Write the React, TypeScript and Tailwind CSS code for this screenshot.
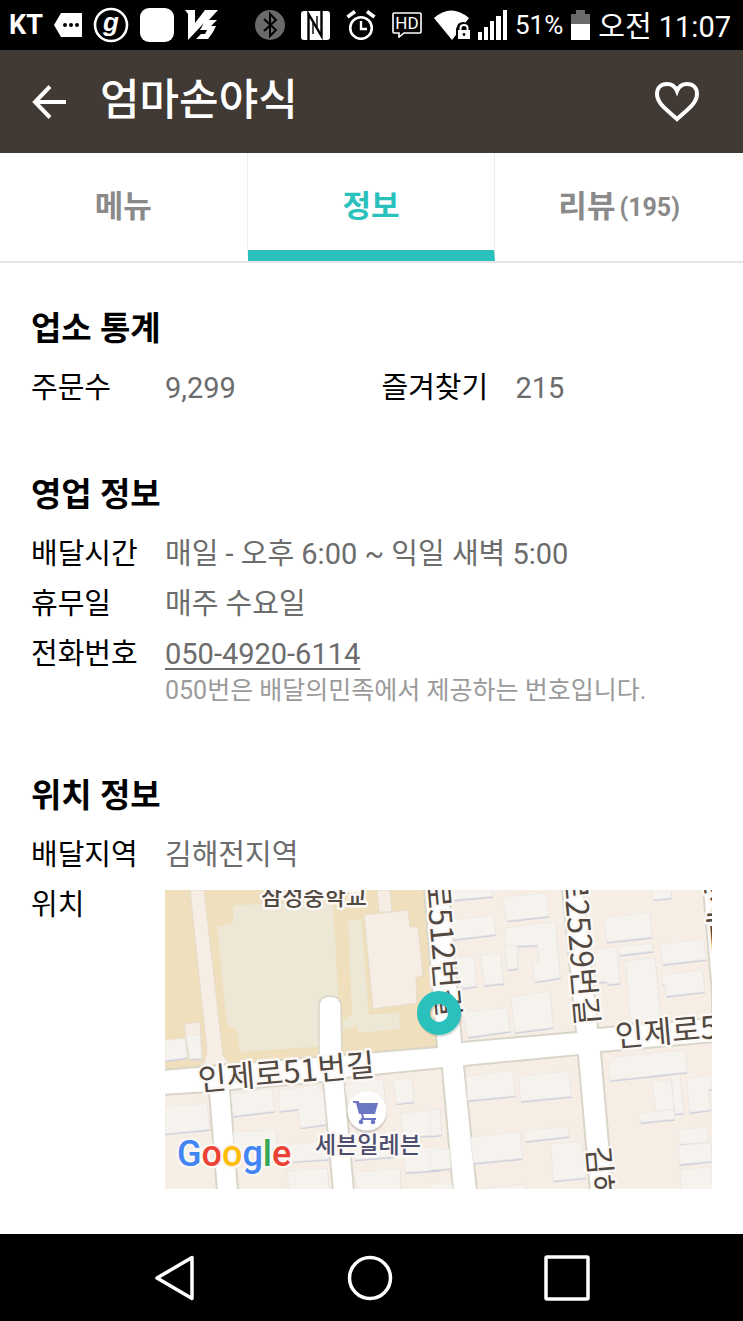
import { useState } from "react";
import type { ReactNode } from "react";

type TabKey = "menu" | "info" | "review";

const tabs: { key: TabKey; label: string; count?: number }[] = [
  { key: "menu", label: "메뉴" },
  { key: "info", label: "정보" },
  { key: "review", label: "리뷰", count: 195 },
];

const StatusBar = () => (
  <div className="flex h-[50px] items-center justify-between bg-black pl-[9px] pr-3 text-white">
    <div className="flex items-center gap-[11px]">
      <span className="text-[27px] leading-8 font-bold">KT</span>
      <svg width="28" height="24" viewBox="0 0 28 24" fill="#fff">
        <path d="M7 0h21v24H7L0 12z" />
        <g fill="#000">
          <circle cx="11" cy="12" r="2" />
          <circle cx="17" cy="12" r="2" />
          <circle cx="23" cy="12" r="2" />
        </g>
      </svg>
      <svg width="36" height="36" viewBox="0 0 36 36">
        <circle cx="18" cy="18" r="16" fill="none" stroke="#fff" strokeWidth="2.6" />
        <text
          x="18"
          y="24"
          textAnchor="middle"
          fill="#fff"
          className="font-['Liberation_Sans',sans-serif] text-[26px] font-bold italic"
        >
          g
        </text>
      </svg>
      <span className="size-[34px] rounded-[9px] bg-white" />
      <svg width="34" height="30" viewBox="0 0 34 30" fill="#fff">
        <path d="M0 0H10V13L20 0H33L24 10H32L26 16H31L28 22L23 29H11L16 24H20L22 20H15L19 13L3 30V4z" />
      </svg>
    </div>

    <div className="flex items-center gap-2">
      <div className="flex items-center gap-4">
        <svg width="30" height="30" viewBox="0 0 30 30">
          <circle cx="15" cy="15" r="15" fill="#6a6a6a" />
          <path
            d="M9 9l12 11-6 6V4l6 6L9 21"
            fill="none"
            stroke="#000"
            strokeWidth="2"
          />
        </svg>
        <svg width="29" height="29" viewBox="0 0 29 29">
          <rect width="29" height="29" rx="3" fill="#fff" />
          <g fill="none" stroke="#000">
            <path d="M7.500 29V3L20.500 25V0" strokeWidth="2.400" />
            <path d="M12 12V23M16 5V16" strokeWidth="1.400" />
          </g>
        </svg>
        <svg width="30" height="30" viewBox="0 0 30 30" fill="none" stroke="#fff">
          <circle cx="15" cy="18" r="10.800" strokeWidth="2.600" />
          <path d="M15 11v8h6" strokeWidth="2.400" />
          <path d="M1.500 7L9 1.500M28.500 7L21 1.500" strokeWidth="3.600" />
        </svg>
        <svg width="30" height="26" viewBox="0 0 30 26">
          <path
            d="M2 1h26q1 0 1 1v18q0 1-1 1H12l-5 4v-4H2q-1 0-1-1V2q0-1 1-1z"
            fill="none"
            stroke="#fff"
            strokeWidth="1.600"
          />
          <text
            x="15"
            y="17"
            textAnchor="middle"
            fill="#fff"
            className="text-[17px]"
          >
            HD
          </text>
        </svg>
      </div>
      <svg className="ml-1" width="36" height="30" viewBox="0 0 36 30">
        <path d="M0 8Q17-7 35 8L18 30z" fill="#fff" />
        <path d="M22 30V19l2-5q5-4 10 0l2 5v11z" fill="#000" />
        <path d="M24 20h12v9H24z" fill="#fff" />
        <path d="M26.500 20v-2q0-3 3.500-3t3.500 3v2" fill="none" stroke="#fff" strokeWidth="2" />
        <circle cx="30" cy="24.500" r="1.400" fill="#000" />
      </svg>
      <svg width="29" height="30" viewBox="0 0 29 30" fill="#fff">
        <path d="M0 22h4v8H0zM6 17h4v13H6zM12 11h4v19h-4zM18 6h5v24h-5zM25 0h4v30h-4z" />
      </svg>
      <span className="text-[26px] leading-8">51%</span>
      <svg width="19" height="30" viewBox="0 0 19 30">
        <path d="M0 4h5V0h9v4h5v11H0z" fill="#6a6a6a" />
        <path d="M0 14h19v16H0z" fill="#fff" />
      </svg>
      <span className="pt-1 text-[29px] leading-8">오전 11:07</span>
    </div>
  </div>
);

// Outlines of the buildings on the map, grouped by the quarter they stand in
const buildings = {
  topRight: [
    "62,15 187,15 187,34 62,45",
    "219,44 244,34 349,24 357,93 231,107",
    "62,104 190,92 198,148 70,163",
    "226,129 376,110 391,278 315,290 307,236 328,230 322,180 228,184",
    "226,184 262,182 263,250 232,254",
    "75,217 132,211 140,303 95,309",
    "152,210 212,205 221,295 163,301",
    "95,382 233,368 240,438 115,456",
    "242,335 360,320 370,427 255,442",
    "667,15 724,15 724,38 670,44",
    "523,97 660,83 666,156 530,171",
    "495,192 560,186 570,294 534,298 530,290 502,290",
    "566,185 667,175 669,198 568,210",
    "587,228 675,218 692,400 602,415",
    "690,178 820,163 829,223 698,238",
    "695,270 819,255 824,320 709,333 705,300 697,296",
  ],
  bottomLeft: [
    "15,16 75,10 82,68 15,76",
    "78,0 120,0 125,70 90,72",
    "15,216 140,205 150,283 15,296",
    "213,176 335,162 343,228 220,243",
    "356,165 470,150 490,172 498,268 422,278 414,222 358,228",
    "555,155 590,135 670,135 676,205 565,205",
    "700,135 755,130 762,200 709,206",
    "722,235 840,222 840,298 730,308",
    "220,292 348,284 352,340 224,350",
    "385,330 500,318 505,372 390,380",
    "382,408 502,400 508,465 386,465",
    "580,328 705,320 710,364 584,374",
    "584,412 720,402 722,465 590,465",
    "730,345 840,335 840,405 736,412",
  ],
  bottomRight: [
    "110,125 248,106 256,182 113,196",
    "266,124 417,108 424,184 272,198",
    "120,308 270,290 277,370 130,384",
    "282,288 413,274 416,304 286,319",
    "362,326 455,320 468,428 370,437",
    "145,462 282,448 285,465 145,465",
    "0,226 30,222 35,299 0,303",
    "0,348 58,342 63,400 0,405",
    "0,446 65,440 68,465 0,465",
    "536,95 560,66 767,44 771,111 540,136",
    "667,142 722,134 734,222 677,228",
    "724,122 750,118 761,234 736,236",
    "628,236 731,222 734,252 632,262",
    "770,132 846,120 846,162 836,164 842,224 778,232",
    "744,284 832,276 836,322 748,328",
    "742,332 844,322 846,378 747,388",
    "750,406 846,395 846,465 753,465",
  ],
};

const Buildings = ({ shapes }: { shapes: string[] }) => (
  <g strokeWidth="2">
    {shapes.map((points) => (
      <g key={points}>
        <polygon points={points} fill="#cfd1de" transform="translate(1 5)" />
        <polygon points={points} fill="#f6f3ee" stroke="#ebe7e3" />
      </g>
    ))}
  </g>
);

const LocationMap = () => (
  <svg
    role="img"
    aria-label="위치"
    className="mt-[10px] h-[299px] w-full"
    viewBox="0 0 547 299"
    preserveAspectRatio="xMidYMid slice"
  >
    <rect width="547" height="299" fill="#fff" />

    {/* city blocks */}
    <g fill="#f6ede5" stroke="#d9d5c8" strokeWidth="2">
      <path d="M-2-2H259L272 157L-2 180z" fill="#efdfbd" />
      <path d="M284-2H397L411 142L297 152z" />
      <path d="M418-2H538L547 104V128L433 138z" />
      <path d="M-2 205L44 202L52 301H-2z" />
      <path d="M65 200L158 192L168 301H73z" />
      <path d="M179 188L277 178L288 301H189z" />
      <path d="M299 176L413 165L425 301H312z" />
      <path d="M436 162L549 152V301H448z" />
    </g>

    {/* school grounds */}
    <g fill="#ede7d5">
      <path d="M68 15L168 13L175 135L178 155L74 162L73 141L62 135L52 37L68 33z" />
      <path d="M183 30L196 29L204 125L234 122L235 139L194 143L192 136L178 140V130L187 125z" />
    </g>
    <g fill="#f6ede5" stroke="#e6dccb" strokeWidth="1">
      <path d="M25 0H39L58 165L64 173L38 176L42 162z" />
      <path d="M212 0H225L227 22H214z" />
      <path d="M199 25L243 20L245 37H253L258 85L251 88L252 113L208 119z" />
      <path d="M19 134L35 132L37 165L24 168z" />
    </g>
    <path
      d="M154 168V117Q154 106 165 106Q176 106 176 117L177 166"
      fill="#fff"
      stroke="#d9d5c8"
      strokeWidth="1.500"
    />
    <path d="M155 163h21v10h-21z" fill="#fff" />

    <g transform="translate(265 -5) scale(.3333)">
      <Buildings shapes={buildings.topRight} />
    </g>
    <g transform="translate(-5 145) scale(.3333)">
      <Buildings shapes={buildings.bottomLeft} />
    </g>
    <g transform="translate(265 145) scale(.3333)">
      <Buildings shapes={buildings.bottomRight} />
    </g>

    {/* street names */}
    <g
      fill="#514842"
      stroke="#fbf8f5"
      strokeWidth="5"
      strokeLinejoin="round"
      paintOrder="stroke"
      className="font-['Noto_Sans_CJK_KR',sans-serif] text-[31px]"
    >
      <text transform="translate(34 201) rotate(-5)">인제로51번길</text>
      <text transform="translate(451 157) rotate(-5)">인제로51번길</text>
      <text transform="translate(261 -9) rotate(85)">로512번길</text>
      <text transform="translate(398 -18) rotate(85)">로2529번길</text>
      <text transform="translate(539 -22) rotate(85)">인제로</text>
      <text transform="translate(422 257) rotate(85)">김해대로</text>
      <text x="96" y="15" className="text-[23px] font-medium">
        삼성중학교
      </text>
      <text x="150" y="263" fill="#4c4c6c" className="text-[23px] font-medium">
        세븐일레븐
      </text>
    </g>

    {/* shop */}
    <circle cx="202" cy="223" r="20" fill="#00000022" />
    <circle cx="202" cy="221" r="19.500" fill="#fff" />
    <g fill="#6b76c4">
      <path d="M191 213h22l-3 11h-16z" />
      <path
        d="M188 212h5l5 15-1 2h14"
        fill="none"
        stroke="#6b76c4"
        strokeWidth="2"
      />
      <circle cx="196" cy="232" r="2.300" />
      <circle cx="208" cy="232" r="2.300" />
    </g>

    {/* current place */}
    <circle cx="275" cy="125" r="15.500" fill="none" stroke="#00000022" strokeWidth="13" />
    <circle cx="274" cy="123" r="15.500" fill="none" stroke="#2ac1bc" strokeWidth="13" />

    <text
      x="12"
      y="276"
      stroke="#faf6f2"
      strokeWidth="5"
      strokeLinejoin="round"
      paintOrder="stroke"
      className="text-[36px] font-medium"
    >
      <tspan fill="#4285f4">G</tspan>
      <tspan fill="#ea4335">o</tspan>
      <tspan fill="#fbbc05">o</tspan>
      <tspan fill="#4285f4">g</tspan>
      <tspan fill="#34a853">l</tspan>
      <tspan fill="#ea4335">e</tspan>
    </text>
  </svg>
);

const Section = ({ title, children }: { title: string; children: ReactNode }) => (
  <section>
    <h2 className="mb-[9px] text-[33px] leading-[50px] font-bold">{title}</h2>
    {children}
  </section>
);

const Row = ({ label, children }: { label: string; children: ReactNode }) => (
  <div className="flex text-[29px] leading-[50px]">
    <dt className="w-[134px] shrink-0">{label}</dt>
    <dd className="min-w-0 flex-1 text-[#6c6c6c]">{children}</dd>
  </div>
);

const App = () => {
  const [activeTab, setActiveTab] = useState<TabKey>("info");
  const [liked, setLiked] = useState(false);

  return (
    <div className="flex min-h-screen flex-col bg-white font-['Roboto','Noto_Sans_CJK_KR',sans-serif] text-black">
      <StatusBar />

      <header className="flex h-[103px] items-center bg-[#413934] px-8 text-white">
        <button type="button" aria-label="뒤로">
          <svg width="35" height="34" viewBox="0 0 35 34" fill="none" stroke="#fff" strokeWidth="4">
            <path d="M18 1.500L3 17l15 15.500M3 17h31" />
          </svg>
        </button>
        <h1 className="ml-[33px] flex-1 pb-1 text-[43px] leading-[60px] font-medium">엄마손야식</h1>
        <button
          type="button"
          aria-label="찜하기"
          aria-pressed={liked}
          className="mr-3"
          onClick={() => setLiked(!liked)}
        >
          <svg
            width="44"
            height="40"
            viewBox="0 0 44 40"
            fill={liked ? "#fff" : "none"}
            stroke="#fff"
            strokeWidth="4"
          >
            <path d="M22 37C11 27 2 21 2 12C2 6 6 2 12 2C16 2 20 4 22 9C24 4 28 2 32 2C38 2 42 6 42 12C42 21 33 27 22 37z" />
          </svg>
        </button>
      </header>

      <nav className="grid h-[110px] grid-cols-3 border-b-2 border-[#e6e6e6]">
        {tabs.map((tab) => (
          <button
            key={tab.key}
            type="button"
            onClick={() => setActiveTab(tab.key)}
            className={`flex items-center justify-center gap-1 border-b-[11px] pt-3 text-[31px] font-bold ${
              tab.key !== "review" ? "border-r border-r-[#ececec]" : ""
            } ${
              activeTab === tab.key
                ? "border-b-[#2ac1bc] text-[#2ac1bc]"
                : "border-b-transparent text-[#8a8a8a]"
            }`}
          >
            {tab.label}
            {tab.count && <span className="text-[25px]">({tab.count})</span>}
          </button>
        ))}
      </nav>

      <main className="flex flex-col gap-[57px] px-[31px] pt-[41px] pb-10">
        <Section title="업소 통계">
          <dl className="grid grid-cols-2 gap-x-5">
            <Row label="주문수">9,299</Row>
            <Row label="즐겨찾기">215</Row>
          </dl>
        </Section>

        <Section title="영업 정보">
          <dl>
            <Row label="배달시간">매일 - 오후 6:00 ~ 익일 새벽 5:00</Row>
            <Row label="휴무일">매주 수요일</Row>
            <Row label="전화번호">
              <a
                href="tel:050-4920-6114"
                className="underline decoration-2 underline-offset-4"
              >
                050-4920-6114
              </a>
              <p className="pb-[11px] text-[25px] leading-6 text-[#9a9a9a]">
                050번은 배달의민족에서 제공하는 번호입니다.
              </p>
            </Row>
          </dl>
        </Section>

        <Section title="위치 정보">
          <dl>
            <Row label="배달지역">김해전지역</Row>
            <Row label="위치">
              <LocationMap />
            </Row>
          </dl>
        </Section>
      </main>

      <footer className="mt-auto flex h-[87px] items-center justify-center gap-[151px] bg-black">
        <button type="button" aria-label="이전">
          <svg width="42" height="46" viewBox="0 0 42 46" fill="none" stroke="#fff" strokeWidth="3.500">
            <path d="M38 2.500v41L3 23z" strokeLinejoin="round" />
          </svg>
        </button>
        <button type="button" aria-label="홈">
          <svg width="46" height="46" viewBox="0 0 46 46" fill="none" stroke="#fff" strokeWidth="3.500">
            <circle cx="23" cy="23" r="20.500" />
          </svg>
        </button>
        <button type="button" aria-label="최근 앱">
          <svg width="46" height="46" viewBox="0 0 46 46" fill="none" stroke="#fff" strokeWidth="3.500">
            <rect x="2" y="2" width="42" height="42" rx="1" />
          </svg>
        </button>
      </footer>
    </div>
  );
};

export default App;
